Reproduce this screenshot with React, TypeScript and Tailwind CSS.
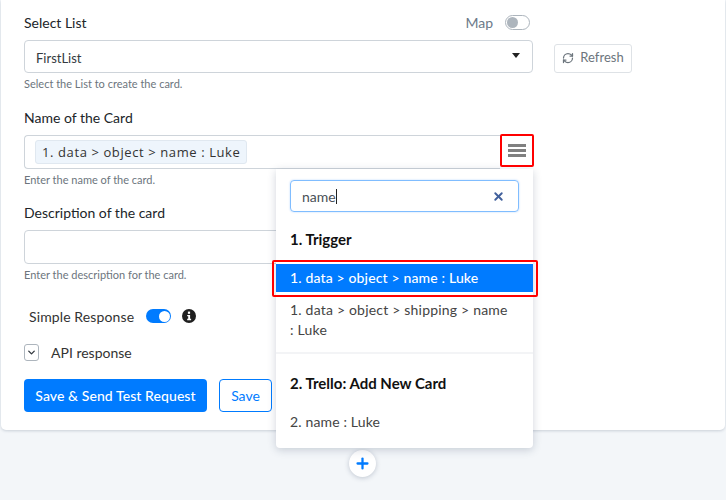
import React from 'react';
import { RefreshCw, ChevronDown, X, Plus } from 'lucide-react';

function Hint({ text }: { text: string }) {
  return <p className="mt-[3px] h-[15px] text-[11px] leading-[15px] text-[#6c757d]">{text}</p>;
}

function Label({ text }: { text: string }) {
  return <p className="h-[24px] text-[14px] leading-[24px] text-[#212529]">{text}</p>;
}

function Dropdown() {
  return (
    <div className="absolute left-[276px] top-[169px] w-[257px] h-[279px] bg-white rounded-b-[4px] shadow-[0_2px_8px_rgba(40,60,90,0.22)] z-10">
      <div className="pl-[14px] pt-[11px]">
        <div className="w-[229px] h-[32px] border border-[#80bdff] rounded-[4px] flex items-center justify-between pl-[11px] pr-[13px] shadow-[0_0_2px_rgba(0,123,255,0.3)]">
          <span className="text-[14px] text-[#495057] flex items-center">name<span className="w-px h-[15px] bg-[#222]" /></span>
          <X size={13} strokeWidth={3.5} className="text-[#41609c]" />
        </div>
      </div>
      <p className="pl-[14px] mt-[16px] h-[22px] text-[15px] leading-[22px] font-bold text-[#111]">1. Trigger</p>
      <div className="mt-[14px] h-[28px] bg-[#007bff] pl-[14px] text-[14px] leading-[28px] tracking-[0.15px] text-white font-medium">1. data &gt; object &gt; name : Luke</div>
      <p className="pl-[14px] pt-[8px] h-[60px] text-[14px] leading-[20px] tracking-[0.2px] text-[#444]">1. data &gt; object &gt; shipping &gt; name<br />: Luke</p>
      <div className="h-[2px] bg-[#f3f4f6]" />
      <p className="pl-[14px] mt-[18px] h-[22px] text-[15px] leading-[22px] font-bold text-[#111]">2. Trello: Add New Card</p>
      <p className="pl-[14px] mt-[17px] text-[14px] leading-[22px] tracking-[0.15px] text-[#444]">2. name : Luke</p>
    </div>
  );
}

export default function App() {
  return (
    <div className="relative w-[726px] h-[500px] overflow-hidden bg-[#f3f6f9] font-['Lato','Liberation_Sans',sans-serif]">
      <div className="ml-[1px] w-[724px] h-[430px] bg-white rounded-b-[5px] shadow-[0_1px_3px_rgba(40,60,90,0.2)] pl-[23px] pt-[10px]">
        <div className="w-[509px] h-[24px] flex items-center justify-between">
          <span className="text-[14px] text-[#212529]">Select List</span>
          <div className="flex items-center gap-[12px] pr-[3px]">
            <span className="text-[14px] text-[#6c7a89]">Map</span>
            <span className="w-[25px] h-[15px] rounded-full border border-[#adb5bd] bg-white flex items-center pl-[1px]">
              <span className="w-[11px] h-[11px] rounded-full bg-[#adb5bd]" />
            </span>
          </div>
        </div>

        <div className="mt-[6px] flex items-end gap-[21px]">
          <div className="w-[509px] h-[33px] border border-[#ced4da] rounded-[4px] flex items-center justify-between pl-[11px] pr-[12px]">
            <span className="text-[13px] leading-[16px] pt-[2px] text-[#343a40]">FirstList</span>
            <span className="w-0 h-0 mb-[2px] border-x-[4px] border-x-transparent border-t-[5px] border-t-[#222]" />
          </div>
          <div className="w-[78px] h-[29px] border border-[#dee2e6] rounded-[3px] flex items-center justify-center gap-[6px] text-[13px] leading-[16px] pb-[3px] text-[#6c757d]">
            <RefreshCw size={12} strokeWidth={2.5} className="mt-[1px]" />
            <span>Refresh</span>
          </div>
        </div>
        <Hint text="Select the List to create the card." />

        <div className="mt-[15px]">
          <Label text="Name of the Card" />
        </div>
        <div className="mt-[5px] w-[476px] h-[34px] border border-[#ced4da] border-r-0 rounded-l-[4px] flex items-center pl-[10px]">
          <span className="h-[24px] px-[6px] rounded-[3px] bg-[#eef5fc] border border-[#e0e8f0] text-[13px] leading-[22px] tracking-[0.6px] text-[#333] font-['Open_Sans','Liberation_Sans',sans-serif]">1. data &gt; object &gt; name : Luke</span>
        </div>
        <Hint text="Enter the name of the card." />

        <div className="mt-[14px]">
          <Label text="Description of the card" />
        </div>
        <div className="mt-[5px] w-[476px] h-[34px] border border-[#ced4da] rounded-[4px]" />
        <Hint text="Enter the description for the card." />

        <div className="mt-[23px] ml-[5px] h-[22px] flex items-center">
          <span className="text-[14px] tracking-[0.12px] text-[#333]">Simple Response</span>
          <span className="ml-[12px] w-[25px] h-[14px] rounded-full bg-[#007bff] flex items-center justify-end pr-[1px]">
            <span className="w-[11px] h-[11px] rounded-full bg-white" />
          </span>
          <svg className="ml-[11px]" width="14" height="14" viewBox="0 0 14 14">
            <circle cx="7" cy="7" r="7" fill="#1f1f1f" />
            <rect x="5.9" y="2.6" width="2.2" height="2.2" fill="#fff" />
            <path d="M5.2 5.9h2.9v3.9h1v1.4H5.2V9.8h1V7.3h-1z" fill="#fff" />
          </svg>
        </div>

        <div className="mt-[17px] h-[17px] flex items-center">
          <span className="w-[15px] h-[17px] border border-[#adb5bd] rounded-[3px] flex items-center justify-center text-[#343a40]">
            <ChevronDown size={11} strokeWidth={3} />
          </span>
          <span className="ml-[12px] text-[14px] text-[#333]">API response</span>
        </div>

        <div className="mt-[18px] flex gap-[12px]">
          <div className="w-[183px] h-[33px] rounded-[4px] bg-[#007bff] text-white text-[14px] leading-[33px] tracking-[0.08px] text-center font-medium">Save &amp; Send Test Request</div>
          <div className="w-[53px] h-[33px] rounded-[4px] border border-[#007bff] text-[#007bff] text-[14px] leading-[31px] text-center">Save</div>
        </div>
      </div>

      <Dropdown />

      {/* red annotation boxes from the screenshot */}
      <div className="absolute left-[500px] top-[134px] w-[34px] h-[33px] border-2 border-[#f00] rounded-[2px] flex items-center justify-center z-20 bg-white">
        <span className="flex flex-col gap-[2px]">
          <span className="w-[18px] h-[3px] bg-[#808080]" />
          <span className="w-[18px] h-[3px] bg-[#808080]" />
          <span className="w-[18px] h-[3px] bg-[#808080]" />
        </span>
      </div>
      <div className="absolute left-[272px] top-[260px] w-[266px] h-[37px] border-2 border-[#f00] rounded-[2px] z-20" />

      <div className="absolute left-[349px] top-[450px] w-[27px] h-[27px] rounded-full bg-white shadow-[0_1px_5px_rgba(40,60,90,0.25)] flex items-center justify-center text-[#007bff]">
        <Plus size={17} strokeWidth={3.2} />
      </div>
    </div>
  );
}
